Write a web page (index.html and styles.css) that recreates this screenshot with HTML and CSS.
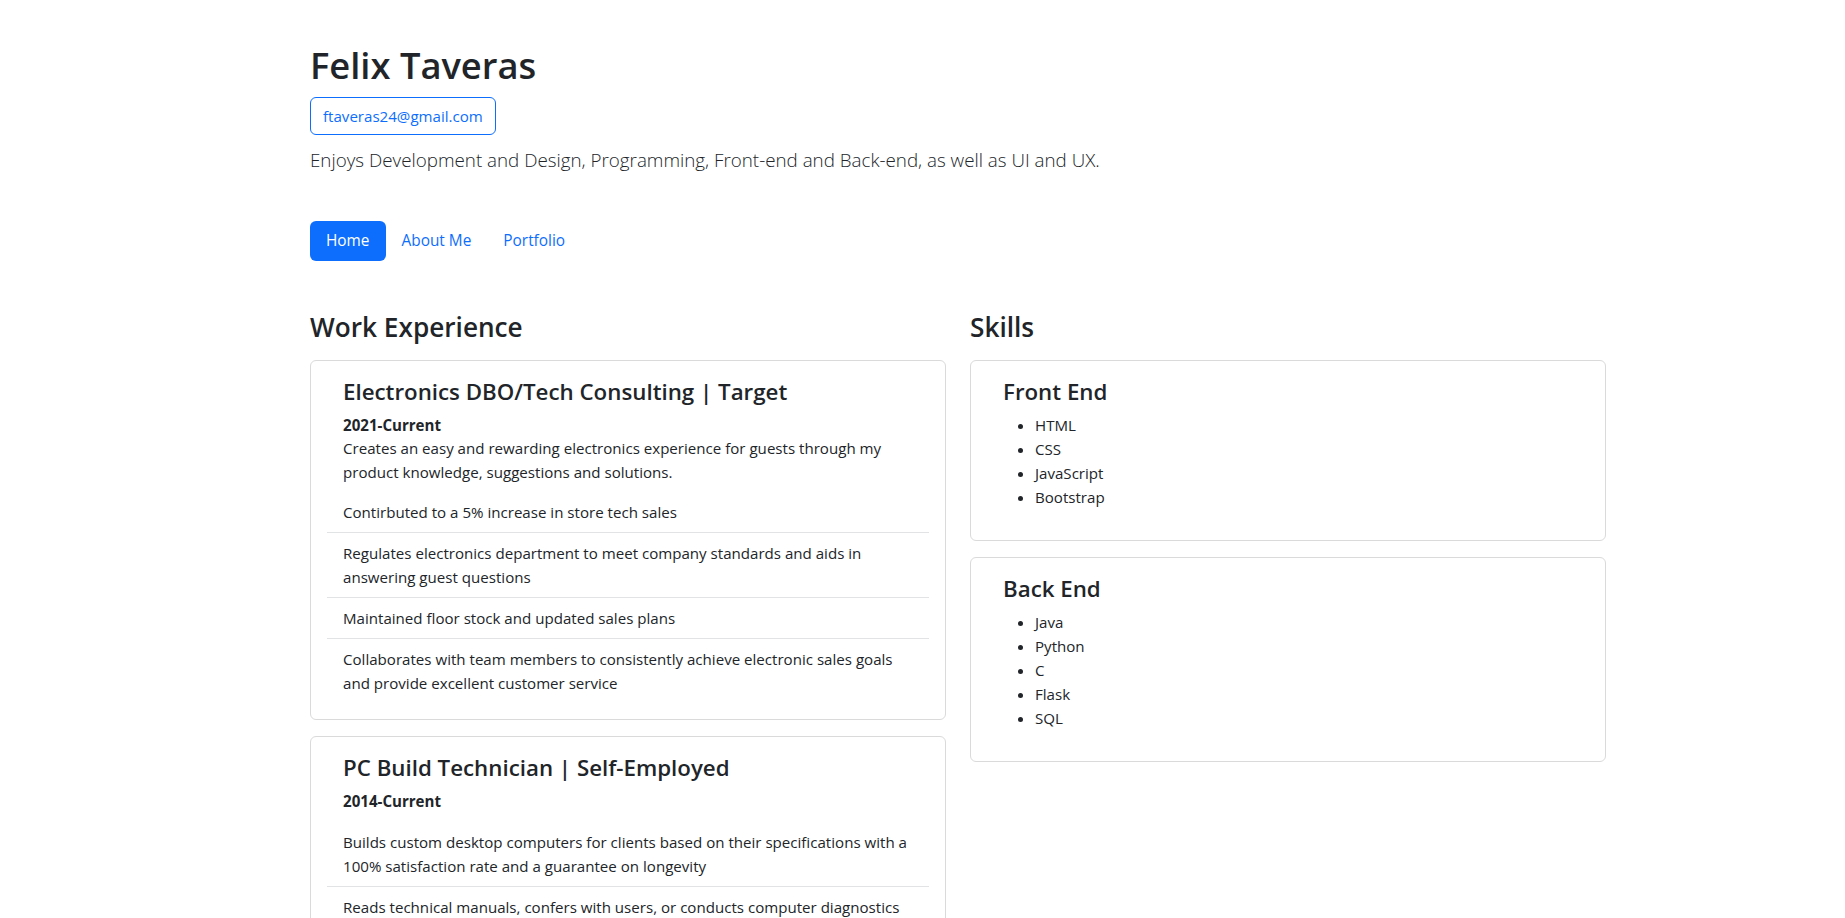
FILE: index.html
```html
<!DOCTYPE html>
<html lang="en">
<head>
<meta charset="utf-8">
<title>Felix Taveras</title>
<link rel="stylesheet" href="styles.css">
</head>
<body>
<div class="container">
  <header class="intro">
    <h1 class="name">Felix Taveras</h1>
    <div class="contact"><a class="btn-outline" href="#">ftaveras24@gmail.com</a></div>
    <p class="lead">Enjoys Development and Design, Programming, Front-end and Back-end, as well as UI and UX.</p>
    <nav class="pills">
      <a class="pill active" href="#">Home</a>
      <a class="pill" href="#">About Me</a>
      <a class="pill" href="#">Portfolio</a>
    </nav>
  </header>

  <main class="columns">
    <section class="col">
      <h2 class="section-title">Work Experience</h2>

      <div class="card">
        <div class="card-body">
          <div class="job-head">
            <h3 class="card-title">Electronics DBO/Tech Consulting | Target</h3>
            <h4 class="job-date">2021-Current</h4>
            <p class="job-desc">Creates an easy and rewarding electronics experience for guests through my product knowledge, suggestions and solutions.</p>
          </div>
          <ul class="list-group">
            <li class="list-item">Contirbuted to a 5% increase in store tech sales</li>
            <li class="list-item">Regulates electronics department to meet company standards and aids in answering guest questions</li>
            <li class="list-item">Maintained floor stock and updated sales plans</li>
            <li class="list-item">Collaborates with team members to consistently achieve electronic sales goals and provide excellent customer service</li>
          </ul>
        </div>
      </div>

      <div class="card">
        <div class="card-body">
          <div class="job-head compact">
            <h3 class="card-title">PC Build Technician | Self-Employed</h3>
            <h4 class="job-date">2014-Current</h4>
          </div>
          <ul class="list-group">
            <li class="list-item">Builds custom desktop computers for clients based on their specifications with a 100% satisfaction rate and a guarantee on longevity</li>
            <li class="list-item">Reads technical manuals, confers with users, or conducts computer diagnostics to investigate and resolve problems</li>
            <li class="list-item">Installs and configures hardware, software and operating systems</li>
          </ul>
        </div>
      </div>
    </section>

    <section class="col">
      <h2 class="section-title">Skills</h2>

      <div class="card">
        <div class="card-body skills-body">
          <h3 class="card-title skill-title">Front End</h3>
          <ul class="skill-list">
            <li>HTML</li>
            <li>CSS</li>
            <li>JavaScript</li>
            <li>Bootstrap</li>
          </ul>
        </div>
      </div>

      <div class="card">
        <div class="card-body skills-body">
          <h3 class="card-title skill-title">Back End</h3>
          <ul class="skill-list">
            <li>Java</li>
            <li>Python</li>
            <li>C</li>
            <li>Flask</li>
            <li>SQL</li>
          </ul>
        </div>
      </div>
    </section>
  </main>
</div>
</body>
</html>
```

FILE: styles.css
```css
html {
  scrollbar-width: none;
}

body {
  margin: 0;
  background: #fff;
  color: #212529;
  font-family: "Open Sans", "Noto Sans", sans-serif;
  font-size: 15.1px;
  line-height: 24px;
}

.container {
  width: 1296px;
  margin-left: 310px;
  padding-top: 41px;
  padding-bottom: 40px;
}

.name {
  margin: 0 0 8px;
  font-size: 36.3px;
  line-height: 48px;
  font-weight: 600;
}

.contact {
  display: flex;
  margin-bottom: 10px;
}

.btn-outline {
  display: inline-block;
  padding: 6px 12px;
  border: 1px solid #0d6efd;
  border-radius: 6px;
  color: #0d6efd;
  text-decoration: none;
  font-size: 15.1px;
  line-height: 24px;
}

.lead {
  margin: 0 0 46px;
  font-size: 18.8px;
  line-height: 30px;
  font-weight: 300;
}

.pills {
  display: flex;
}

.pill {
  display: block;
  padding: 8px 16px;
  border-radius: 6px;
  color: #0d6efd;
  text-decoration: none;
  font-size: 15.4px;
  line-height: 24px;
}

.pill.active {
  background: #0d6efd;
  color: #fff;
}

.columns {
  display: grid;
  grid-template-columns: 1fr 1fr;
  column-gap: 24px;
  margin-top: 50px;
  align-items: start;
}

.section-title {
  margin: 0 0 17px;
  font-size: 26.2px;
  line-height: 32px;
  font-weight: 600;
}

.card {
  border: 1px solid #dadada;
  border-radius: 6px;
  margin-bottom: 16px;
  background: #fff;
}

.card-body {
  padding: 16px;
}

.job-head {
  padding: 0 16px;
  margin-bottom: 8px;
}

.job-head.compact {
  margin-bottom: 9px;
}

.card-title {
  margin: 0 0 7px;
  font-size: 22.3px;
  line-height: 30px;
  font-weight: 600;
}

.job-date {
  margin: 0;
  font-size: 15.1px;
  line-height: 22.4px;
  font-weight: 700;
}

.job-desc {
  margin: 0;
}

.list-group {
  list-style: none;
  margin: 0;
  padding: 0;
}

.list-item {
  padding: 8px 16px;
  border-bottom: 1px solid #e2e3e5;
}

.list-item:last-child {
  border-bottom: 0;
}

.skills-body {
  padding: 16px 32px;
}

.skill-title {
  margin-bottom: 6px;
}

.skill-list {
  margin: 0 0 15px;
  padding-left: 32px;
}
```
